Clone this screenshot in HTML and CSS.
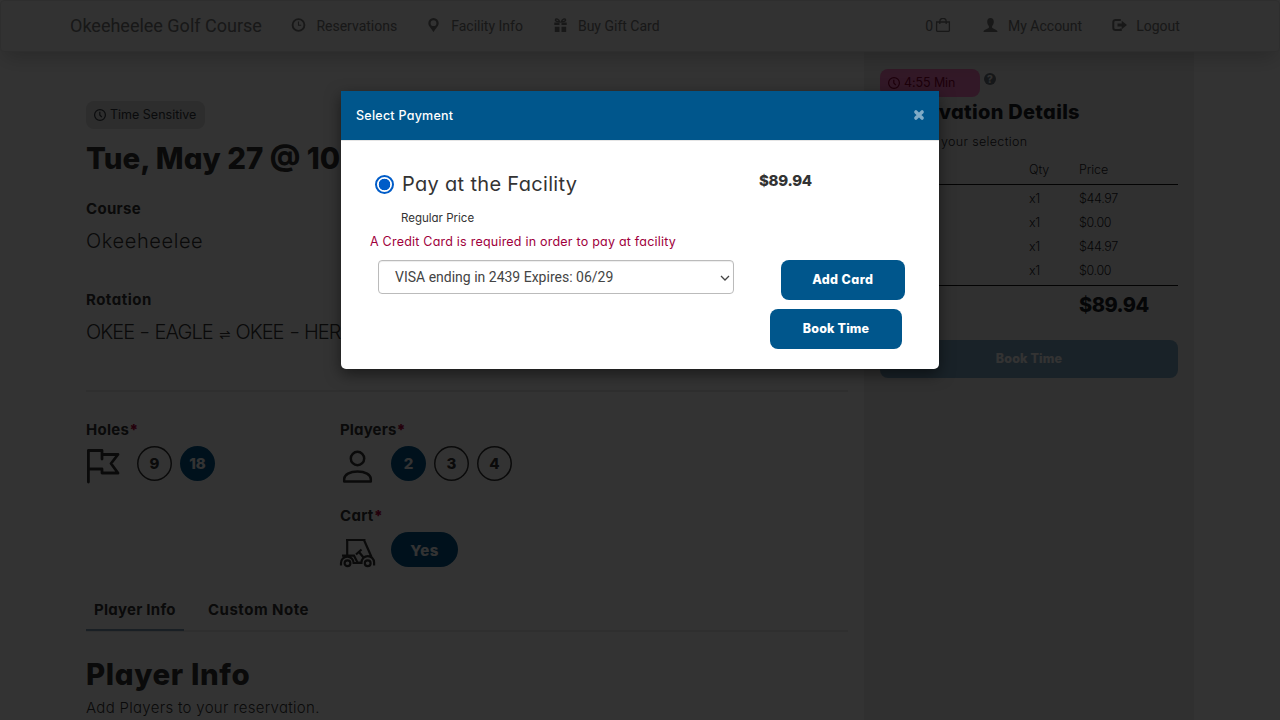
FILE: index.html
```html
<!DOCTYPE html>
<html lang="en">
<head>
<meta charset="utf-8">
<title>Okeeheelee Golf Course</title>
<link rel="stylesheet" href="styles.css">
</head>
<body>
<div class="page">
  <header class="navbar">
    <a class="brand">Okeeheelee Golf Course</a>
    <nav class="nav-left">
      <a class="nav-item">
        <svg class="nav-icon" viewBox="0 0 14 14"><circle cx="7" cy="7" r="5.9" fill="none" stroke="currentColor" stroke-width="1.9"/><path d="M7 3.6V7.3H9.7" fill="none" stroke="currentColor" stroke-width="1.1"/></svg>
        <span>Reservations</span>
      </a>
      <a class="nav-item nav-facility">
        <svg class="nav-icon" viewBox="0 0 14 14"><path fill="currentColor" fill-rule="evenodd" d="M7 0a5.2 5.2 0 0 0-5.2 5.2C1.800 8.300 5.500 11 7 14.200 8.500 11 12.200 8.300 12.200 5.200A5.200 5.200 0 0 0 7 0zm0 2.300a2.900 2.900 0 1 1 0 5.800 2.900 2.900 0 0 1 0-5.800z"/></svg>
        <span>Facility Info</span>
      </a>
      <a class="nav-item nav-gift">
        <svg class="nav-icon" viewBox="0 0 14 14"><path fill="currentColor" d="M.8 4.400h12.400V7H8V4.800H6V7H.8zM1.300 8.700H6V14H1.300zM8 8.700h4.700V14H8z"/><path d="M6.200 3.900C5.400 1.300 2.600.2 2 1.500S3.200 4 6.200 3.900zM7.800 3.900C8.600 1.300 11.400.2 12 1.500S10.800 4 7.800 3.900z" fill="none" stroke="currentColor" stroke-width="1.400"/></svg>
        <span>Buy Gift Card</span>
      </a>
    </nav>
    <nav class="nav-right">
      <a class="cart-link">0<svg class="bag-icon" viewBox="0 0 16 14"><path d="M1.600 4h12.800v8.200a1.200 1.200 0 0 1-1.200 1.200H2.800a1.200 1.200 0 0 1-1.200-1.200zM4.800 6V3.500a3.200 3.200 0 0 1 6.400 0V6" fill="none" stroke="currentColor" stroke-width="1.300"/></svg></a>
      <a class="nav-item nav-account">
        <svg class="nav-icon" viewBox="0 0 14 14"><path fill="currentColor" d="M7 0C4.700 0 3.700 1.500 3.700 3.800c0 1.900.8 3.400 1.700 4.300v1.300C5.400 10.600 0 11 0 14h14c0-3-5.400-3.400-5.400-4.600V8.100c.9-.9 1.700-2.400 1.700-4.300C10.300 1.500 9.300 0 7 0z"/></svg>
        <span>My Account</span>
      </a>
      <a class="nav-item nav-logout">
        <svg class="nav-icon" viewBox="0 0 15 14"><path d="M8.800 1.900H3.600A2.300 2.300 0 0 0 1.300 4.200v5.600a2.300 2.300 0 0 0 2.300 2.300h5.200v-1.500" fill="none" stroke="currentColor" stroke-width="2"/><path fill="currentColor" d="M5.500 5.500h4.200V2.700L15 7l-5.300 4.300V8.500H5.500z"/></svg>
        <span>Logout</span>
      </a>
    </nav>
  </header>

  <div class="content">
    <main class="main">
      <span class="badge">
        <svg class="clock" viewBox="0 0 12 12"><circle cx="6" cy="6" r="5.400"/><path d="M5.800 2.800V6l2 2.200"/></svg>
        <span>Time Sensitive</span>
      </span>
      <h1 class="title">Tue, May 27 @ 10:10 AM</h1>
      <div class="label">Course</div>
      <div class="value course">Okeeheelee</div>
      <div class="label rotation-label">Rotation</div>
      <div class="value rotation">OKEE <span class="dash">-</span> EAGLE <span class="swap">⇌</span> OKEE <span class="dash">-</span> HERON</div>
      <hr class="rule">
      <div class="options">
        <section class="option-col">
          <div class="label opt-label">Holes<span class="req">*</span></div>
          <div class="choices">
            <svg class="opt-icon" viewBox="0 0 36 36"><path d="M2.400 36V4.500H16v8.500M16 8.500h16L25 17.500l7 9.500H16V23H2.400M16 23v4" fill="none" stroke="currentColor" stroke-width="2.800" stroke-linecap="round" stroke-linejoin="round"/></svg>
            <span class="choice">9</span>
            <span class="choice on">18</span>
          </div>
        </section>
        <section class="option-col">
          <div class="label opt-label players-label">Players<span class="req">*</span></div>
          <div class="choices">
            <svg class="opt-icon" viewBox="0 0 36 36"><circle cx="17.500" cy="12.500" r="6.700" fill="none" stroke="currentColor" stroke-width="2.500"/><path d="M4.200 35.500v-2.400c0-4.400 5.600-7.600 13.300-7.600s13.300 3.200 13.300 7.600v2.400z" fill="none" stroke="currentColor" stroke-width="2.500" stroke-linejoin="round"/></svg>
            <span class="choice on">2</span>
            <span class="choice">3</span>
            <span class="choice">4</span>
          </div>
          <div class="label opt-label cart-label">Cart<span class="req">*</span></div>
          <div class="choices">
            <svg class="opt-icon" viewBox="0 0 36 36" fill="none" stroke="currentColor" stroke-width="2.200"><path d="M6 8h19.500M7.200 8v15.500M24 8l7.500 17M2 23.700h12l3.500 6.800h4M1 33.500v-2.500a6.300 6.300 0 0 1 12.600 0M21.500 32v-1.500a6.300 6.300 0 0 1 12.600 0v3M12.500 31h9.500"/><path d="M16 22.500l5.500-5M19 20l4.500 5.500"/><circle cx="7.500" cy="31.200" r="2.900"/><circle cx="27.700" cy="31.200" r="2.900"/></svg>
            <span class="choice pill on">Yes</span>
          </div>
        </section>
      </div>
      <div class="tabs">
        <span class="tab active">Player Info</span>
        <span class="tab">Custom Note</span>
      </div>
      <h2 class="title player-title">Player Info</h2>
      <p class="hint">Add Players to your reservation.</p>
    </main>

    <aside class="sidebar">
      <div class="timer-row">
        <span class="badge timer">
          <svg class="clock" viewBox="0 0 12 12"><circle cx="6" cy="6" r="5.400"/><path d="M5.800 2.800V6l2 2.200"/></svg>
          <span>4:55 Min</span>
        </span>
        <span class="help">?</span>
      </div>
      <h3 class="side-title">Reservation Details</h3>
      <p class="side-text"><span class="side-verb">Confirm</span>your selection</p>
      <div class="row head"><span></span><span>Qty</span><span>Price</span></div>
      <div class="rows">
        <div class="row"><span></span><span>x1</span><span>$44.97</span></div>
        <div class="row"><span></span><span>x1</span><span>$0.00</span></div>
        <div class="row"><span></span><span>x1</span><span>$44.97</span></div>
        <div class="row"><span></span><span>x1</span><span>$0.00</span></div>
      </div>
      <div class="row total"><span></span><span></span><span>$89.94</span></div>
      <button class="side-book">Book Time</button>
    </aside>
  </div>
</div>

<div class="backdrop">
  <div class="modal">
    <div class="modal-head">
      <span>Select Payment</span>
      <svg class="close" viewBox="0 0 12 12"><path d="M2.900 2.900l6.200 6.200M9.100 2.900L2.900 9.100" stroke="currentColor" stroke-width="3.500" stroke-linecap="round"/></svg>
    </div>
    <div class="modal-body">
      <div class="pay-row">
        <span class="radio"></span>
        <span class="pay-name">Pay at the Facility</span>
        <span class="pay-price">$89.94</span>
      </div>
      <div class="pay-kind">Regular Price</div>
      <div class="warning">A Credit Card is required in order to pay at facility</div>
      <div class="card-row">
        <div class="select"><span>VISA ending in 2439 Expires: 06/29</span><svg class="caret" viewBox="0 0 10 6"><path d="M1 1l4 4 4-4" fill="none" stroke="currentColor" stroke-width="1.300"/></svg></div>
        <button class="btn add">Add Card</button>
      </div>
      <button class="btn book">Book Time</button>
    </div>
  </div>
</div>
</body>
</html>
```
FILE: styles.css
```css
* { box-sizing: border-box; }

body {
  margin: 0;
  width: 1280px;
  height: 720px;
  overflow: hidden;
  background: #fff;
  color: #222;
  font-family: Inter, "Open Sans", sans-serif;
  font-feature-settings: "cv11";
}

h1, h2, h3, p { margin: 0; }

.page { height: 720px; overflow: hidden; white-space: nowrap; }

/* Navigation */
.navbar {
  position: relative;
  display: flex;
  height: 52px;
  padding: 0 0 0 69px;
  border: 1px solid #e7e7e7;
  border-radius: 4px;
  background: #f8f8f8;
  box-shadow: 0 10px 20px -4px rgba(0, 0, 0, .2);
  color: #777;
  font: 14px/50px Roboto, sans-serif;
}
.brand { width: 221.4px; font-size: 18px; }
.nav-left, .nav-right { display: flex; }
.nav-right { margin-left: 265.6px; }
.nav-item { display: flex; gap: 10px; }
.nav-icon { width: 15px; height: 14px; margin-top: 17px; }
.nav-facility { margin-left: 29px; }
.nav-gift { margin-left: 30px; }
.nav-account { margin-left: 32px; }
.nav-logout { margin-left: 30px; gap: 9px; }
.cart-link { display: flex; gap: 2px; }
.bag-icon { width: 16px; height: 14px; margin-top: 17px; }

.content { display: flex; height: 668px; padding-left: 86px; }
.main { width: 762px; padding-top: 49px; color: #343434; }

/* Badges */
.badge {
  display: flex;
  gap: 4px;
  width: 119px;
  height: 28px;
  padding-left: 8px;
  border-radius: 8px;
  background: #dedede;
  color: #343a40;
  font-size: 12.5px;
  line-height: 28px;
}
.clock {
  width: 12px;
  height: 12px;
  margin-top: 8px;
  fill: none;
  stroke: currentColor;
  stroke-width: 1.2;
}

.title {
  height: 44px;
  margin-top: 7px;
  font-size: 29.5px;
  font-weight: 800;
  line-height: 44px;
}
.label {
  height: 22px;
  margin-top: 17px;
  font-size: 15px;
  font-weight: 750;
  line-height: 24px;
  letter-spacing: .3px;
}
.value { height: 30px; margin-top: 7px; font-size: 20px; font-weight: 300; line-height: 30px; }
.course { letter-spacing: .6px; }
.rotation-label { margin-top: 32px; letter-spacing: .5px; }
.rotation { letter-spacing: -.95px; word-spacing: 1.5px; }
.dash { display: inline-block; transform: scaleX(1.2); }
.swap { font: 13.500px/20px "DejaVu Sans", sans-serif; }
.rule { height: 2px; margin: 43px 0 0; border: 0; background: #e8e8e8; }

/* Booking options */
.options { display: grid; grid-template-columns: 254px 1fr; height: 192px; padding-top: 27px; }
.opt-label { height: 22px; margin: 0; line-height: 22px; }
.players-label { letter-spacing: .15px; }
.cart-label { margin-top: 24px; }
.req { color: #b4003c; font-weight: 900; }
.choices { display: flex; gap: 8px; height: 35px; margin-top: 5px; }
.opt-icon { width: 36px; height: 36px; margin-right: 7px; overflow: visible; }
.choice {
  width: 35px;
  height: 35px;
  border-radius: 18px;
  box-shadow: inset 0 0 0 1.5px #343434;
  font-size: 15px;
  font-weight: 800;
  line-height: 35px;
  text-align: center;
}
.choice.on { box-shadow: none; background: #00568c; color: #fff; }
.choice.pill { width: 67px; line-height: 37px; letter-spacing: .5px; }

/* Tabs */
.tabs { display: flex; gap: 16px; height: 48px; border-bottom: 2px solid #e8e8e8; }
.tab {
  height: 47px;
  padding: 0 8px;
  font-size: 15px;
  font-weight: 750;
  line-height: 52px;
  letter-spacing: .25px;
}
.tab.active { width: 98px; border-bottom: 2px solid #7f9db5; }
.tab:last-child { letter-spacing: .5px; }
.player-title { height: 44px; margin-top: 20px; letter-spacing: .6px; }
.hint { margin-top: 1px; font-size: 15px; font-weight: 300; line-height: 22px; letter-spacing: .3px; }

/* Sidebar */
.sidebar { width: 330px; height: 668px; margin-left: 16px; padding: 17px 16px 0; background: #f1f1f1; color: #1c2127; }
.timer-row { display: flex; gap: 4px; }
.timer { width: 100px; background: #f97bc0; color: #8f0035; letter-spacing: -.1px; }
.help {
  width: 12px;
  height: 12px;
  margin-top: 4px;
  border-radius: 50%;
  background: #6c747c;
  color: #f1f1f1;
  font-size: 10px;
  font-weight: 800;
  line-height: 12px;
  text-align: center;
}
.side-title { font-size: 20px; font-weight: 800; line-height: 30px; letter-spacing: .3px; }
.side-text { font-size: 12.5px; font-weight: 300; line-height: 29px; letter-spacing: .33px; }
.side-verb { display: inline-block; width: 61px; }
.row { display: grid; grid-template-columns: 149px 50px 1fr; height: 24px; font-size: 12.5px; font-weight: 300; line-height: 24px; letter-spacing: -.35px; }
.head { height: 28px; line-height: 28px; letter-spacing: -.1px; }
.rows { height: 102px; padding: 2px 0 4px; border: solid #111; border-width: 1px 0; }
.total { height: 54px; font-size: 20px; font-weight: 800; line-height: 39px; letter-spacing: -.5px; }
.side-book {
  display: block;
  width: 298px;
  height: 38px;
  padding: 0 0 2px;
  border: 0;
  border-radius: 8px;
  background: #7fa9c5;
  color: #fff;
  font: 800 12.5px Inter, sans-serif;
  letter-spacing: .15px;
}

/* Payment dialog */
.backdrop { position: absolute; inset: 0; padding: 91px 0 0 341px; background: rgba(0, 0, 0, .8); }
.modal {
  width: 598px;
  height: 278px;
  border-radius: 0 0 5px 5px;
  overflow: hidden;
  background: #fff;
  box-shadow: 0 5px 15px rgba(0, 0, 0, .5);
  color: #333;
}
.modal-head {
  display: flex;
  justify-content: space-between;
  height: 50px;
  padding: 0 14px 0 15px;
  background: #00568c;
  border-bottom: 1px solid #e5e5e5;
  background-clip: padding-box;
  color: #fff;
  font-size: 12.5px;
  font-weight: 500;
  line-height: 49px;
  letter-spacing: .25px;
}
.close { width: 12px; height: 12px; margin-top: 18px; color: #80abc6; }
.modal-body { padding: 27px 29px 0; }
.pay-row { display: flex; height: 37px; padding-left: 5px; }
.radio {
  width: 19px;
  height: 19px;
  margin-top: 7px;
  border: 2px solid #005cc8;
  border-radius: 50%;
  background: radial-gradient(circle, #005cc8 5.500px, #fff 6.100px);
}
.pay-name { width: 365px; padding-left: 8px; font-size: 20px; line-height: 32px; letter-spacing: .32px; }
.pay-price { font-size: 15px; font-weight: 800; line-height: 25px; letter-spacing: -.3px; }
.pay-kind { height: 24px; padding-left: 31px; font-size: 11.5px; line-height: 26px; }
.warning { height: 31px; font-size: 12.5px; line-height: 26px; letter-spacing: .22px; color: #a0003c; }
.card-row { display: flex; gap: 47px; height: 49px; padding-left: 8px; }
.select {
  display: flex;
  justify-content: space-between;
  width: 355.5px;
  height: 34px;
  padding: 0 3px 0 16px;
  border: 1px solid #bbb;
  border-radius: 4px;
  box-shadow: inset 0 1px 1px rgba(0, 0, 0, .075);
  color: #444;
  font: 14px/33px Roboto, sans-serif;
}
.caret { width: 10px; height: 6px; margin-top: 14px; }
.btn {
  height: 40px;
  padding: 0 0 2px;
  border: 0;
  border-radius: 8px;
  background: #00568c;
  color: #fff;
  font: 800 12.5px Inter, sans-serif;
  font-feature-settings: "cv11";
}
.add { width: 124.5px; letter-spacing: .4px; }
.book { display: block; width: 131.5px; margin-left: 400.3px; letter-spacing: .15px; }
```
